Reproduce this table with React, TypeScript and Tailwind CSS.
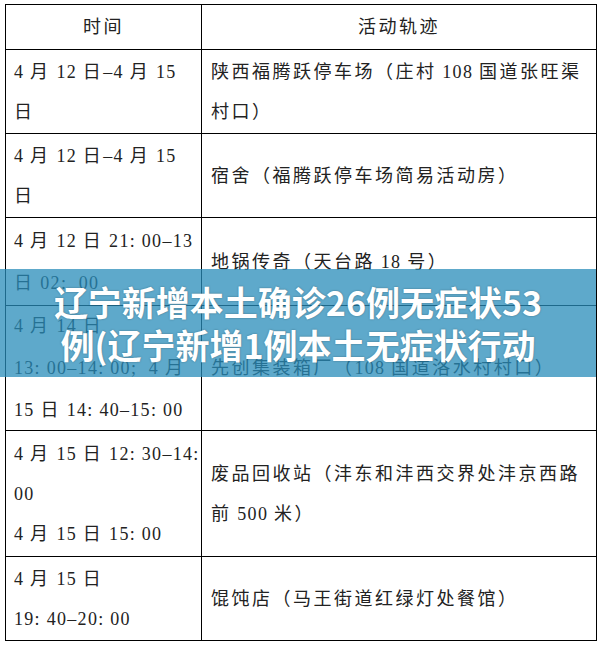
import React from 'react';

type Row = {
  h: string;
  lh: string;
  left: string[];
  right: string[];
};

// 每一行的高度和文字，按原图手动断行
const rows: Row[] = [
  {
    h: 'h-[84px]',
    lh: 'leading-[40px]',
    left: ['4 月 12 日–4 月 15', '日'],
    right: ['陕西福腾跃停车场（庄村 108 国道张旺渠', '村口）'],
  },
  {
    h: 'h-[84px]',
    lh: 'leading-[40px]',
    left: ['4 月 12 日–4 月 15', '日'],
    right: ['宿舍（福腾跃停车场简易活动房）'],
  },
  {
    h: 'h-[88px]',
    lh: 'leading-[42px]',
    left: ['4 月 12 日 21: 00–13', '日 02:  00'],
    right: ['地锅传奇（天台路 18 号）'],
  },
  {
    h: 'h-[125px]',
    lh: 'leading-[42px]',
    left: ['4 月 14 日', '13: 00–14: 00;  4 月', '15 日 14: 40–15: 00'],
    right: ['先创集装箱厂（108 国道洛水村村口）'],
  },
  {
    h: 'h-[126px]',
    lh: 'leading-[40px]',
    left: ['4 月 15 日 12: 30–14:', '00', '4 月 15 日 15: 00'],
    right: ['废品回收站（沣东和沣西交界处沣京西路', '前 500 米）'],
  },
  {
    h: 'h-[84px]',
    lh: 'leading-[40px]',
    left: ['4 月 15 日', '19: 40–20: 00'],
    right: ['馄饨店（马王街道红绿灯处餐馆）'],
  },
];

const tableFont = { fontFamily: '"Liberation Serif", "Noto Sans CJK SC", serif' };

// 中文字间距大一些，数字和符号间距小一些
const Line = ({ text }: { text: string }) => {
  const parts = text.match(/[\u3000-\u9fff\uff00-\uffef]+|[^\u3000-\u9fff\uff00-\uffef]+/g) || [];
  return (
    <span>
      {parts.map((p, k) =>
        /[\u3000-\u9fff\uff00-\uffef]/.test(p) ? (
          <span key={k} className="tracking-[2.5px]">{p}</span>
        ) : (
          <span key={k} className="tracking-[1.3px]">{p}</span>
        )
      )}
    </span>
  );
};

const App = () => {
  return (
    <div className="relative w-[600px] h-[646px] bg-white overflow-hidden">
      <div className="pl-[5px] pt-[4px]">
        <div
          className="grid grid-cols-[196px_395px] w-[592px] border-t border-l border-black text-[18px] text-[#222]"
          style={tableFont}
        >
          {/* 表头 */}
          <div className="h-[45px] border-r border-b border-black flex items-center justify-center tracking-[2.5px]">
            时间
          </div>
          <div className="h-[45px] border-r border-b border-black flex items-center justify-center tracking-[2.5px]">
            活动轨迹
          </div>

          {rows.map((row, i) => (
            <React.Fragment key={i}>
              <div className={`${row.h} ${row.lh} border-r border-b border-black flex flex-col justify-center pl-[8px] whitespace-pre`}>
                {row.left.map((line, j) => (
                  <Line key={j} text={line} />
                ))}
              </div>
              <div className={`${row.h} ${row.lh} border-r border-b border-black flex flex-col justify-center pl-[9px] whitespace-pre`}>
                {row.right.map((line, j) => (
                  <Line key={j} text={line} />
                ))}
              </div>
            </React.Fragment>
          ))}
        </div>
      </div>

      {/* 标题遮罩 */}
      <div className="absolute left-0 top-[269px] w-[596px] h-[108px] bg-[rgba(40,140,185,0.75)] pt-[11px] overflow-hidden">
        <div
          className="text-center text-white font-bold text-[34px] leading-[43px] [text-shadow:0_0_2px_rgba(0,0,0,0.35)]"
          style={{ fontFamily: '"Noto Sans CJK SC", "Noto Sans", sans-serif' }}
        >
          <div>辽宁新增本土确诊26例无症状53</div>
          <div>例(辽宁新增1例本土无症状行动</div>
        </div>
      </div>
    </div>
  );
};

export default App;
